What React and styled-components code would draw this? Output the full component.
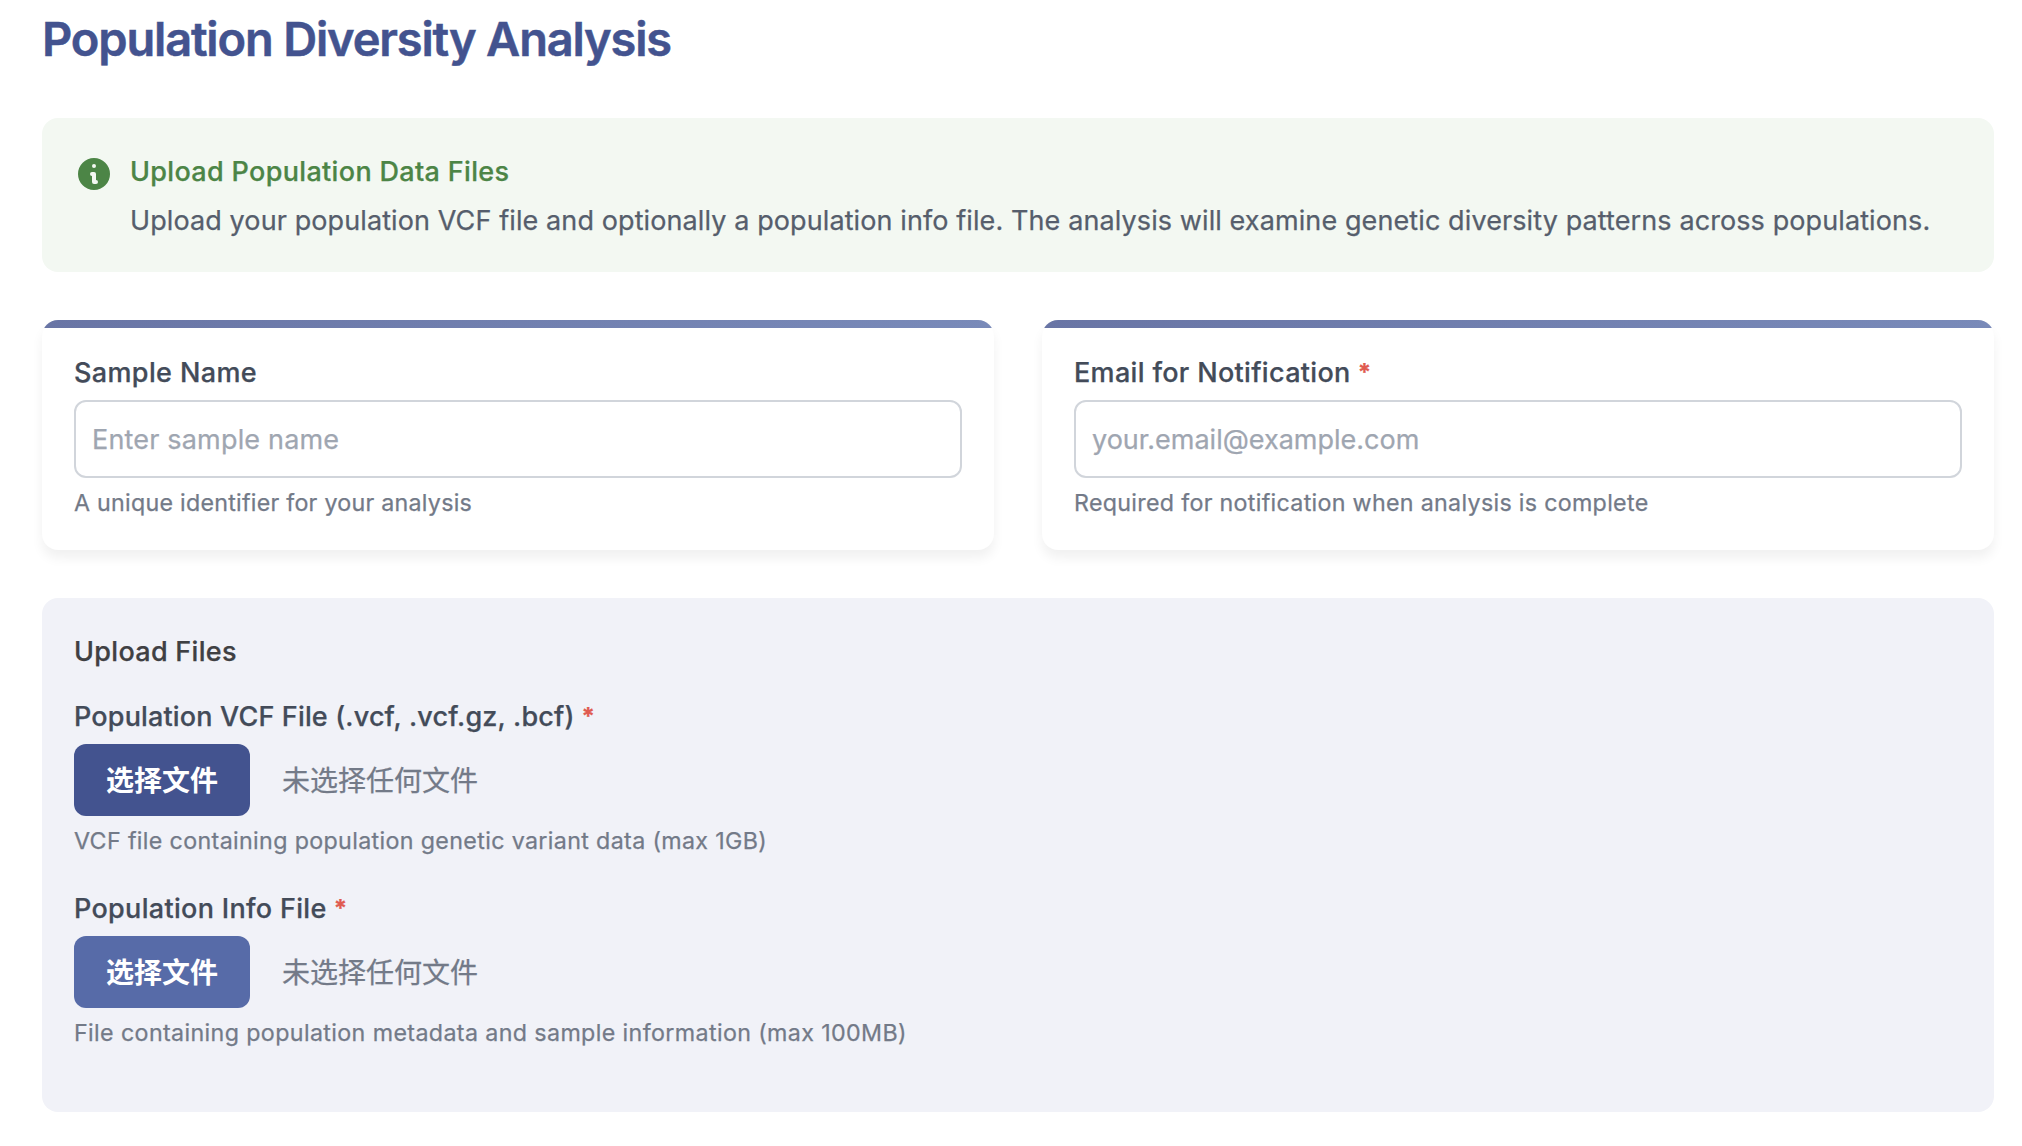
import React from "react";
import styled, { createGlobalStyle } from "styled-components";

const colors = {
  primary: "#43538f",
  secondary: "#576ba8",
  green: "#4c8546",
  greenTint: "#f3f8f2",
  panel: "#f1f2f8",
  label: "#434b59",
  muted: "#737a88",
};

const GlobalStyle = createGlobalStyle`
  *, *::before, *::after {
    box-sizing: border-box;
  }
  body {
    margin: 0;
    background: #fff;
    font-family: Inter, "Noto Sans CJK SC", sans-serif;
    font-size: 27px;
    line-height: 42px;
    -webkit-text-stroke: 0.25px currentColor;
  }
`;

const Page = styled.main`
  display: flex;
  flex-direction: column;
  padding: 11px 28px 34px 42px;
  min-height: 1146px;
`;

const Title = styled.h1`
  margin: 0 0 51px;
  font-size: 47px;
  font-weight: 600;
  line-height: 56px;
  letter-spacing: -1.172px;
  -webkit-text-stroke-width: 0.5px;
  color: ${colors.primary};
`;

const Banner = styled.section`
  display: flex;
  gap: 16px;
  padding: 32px 32px 30px;
  border-radius: 16px;
  background: ${colors.greenTint};
`;

const InfoIcon = styled.svg`
  flex: none;
  width: 40px;
  height: 40px;
  margin-top: 4px;
  fill: ${colors.green};
`;

const BannerText = styled.div`
  flex: 1;
  white-space: nowrap;
`;

const BannerHeading = styled.h2`
  margin: 0 0 6px;
  font-size: 27px;
  font-weight: 500;
  line-height: 44px;
  letter-spacing: 0.33px;
  color: ${colors.green};
`;

const BannerBody = styled.p`
  margin: 0;
  letter-spacing: 0.1px;
  color: #565e6c;
`;

const CardGrid = styled.div`
  display: grid;
  grid-template-columns: 1fr 1fr;
  gap: 48px;
  margin: 48px 0;
`;

const Card = styled.section`
  padding: 32px 32px 30px;
  border-radius: 16px;
  background: linear-gradient(90deg, #6975a5, #798ab9) top / 100% 8px no-repeat #fff;
  box-shadow: 0 8px 12px rgba(0, 0, 0, 0.06);
`;

const FieldLabel = styled.label`
  display: flex;
  gap: 7px;
  margin-bottom: 6px;
  font-weight: 500;
  letter-spacing: ${(p) => p.$tracking}px;
  color: ${colors.label};
`;

const RequiredMark = styled.span`
  color: #e05a50;
  font-size: 24px;
  font-weight: 700;
  line-height: 42px;
  letter-spacing: 0;
`;

const TextInput = styled.input`
  display: block;
  width: 100%;
  height: 78px;
  padding: 0 16px;
  border: 2px solid #d1d5db;
  border-radius: 12px;
  background: #fff;
  font: inherit;
  letter-spacing: ${(p) => p.$tracking}px;

  &::placeholder {
    color: #9fa6b1;
    opacity: 1;
  }
`;

const HelpText = styled.p`
  margin: 8px 0 0;
  font-size: 23.25px;
  line-height: 34px;
  letter-spacing: ${(p) => p.$tracking}px;
  color: ${colors.muted};
`;

const UploadPanel = styled.section`
  padding: 32px;
  border-radius: 16px;
  background: ${colors.panel};
`;

const PanelHeading = styled.h2`
  margin: 0 0 22px;
  font-size: 27px;
  font-weight: 500;
  line-height: 44px;
  letter-spacing: 0.3px;
  color: #3f4043;
`;

const UploadField = styled.div`
  margin-bottom: 30px;
`;

const FileRow = styled.div`
  display: flex;
  align-items: center;
  gap: 32px;
  font-family: "Noto Sans CJK SC", sans-serif;
  font-size: 28px;
`;

const FileButton = styled.button`
  height: 72px;
  padding: 0 32px 2px;
  border: 0;
  border-radius: 12px;
  background: ${(p) => (p.$secondary ? colors.secondary : colors.primary)};
  color: #fff;
  font: inherit;
  font-weight: 700;
  -webkit-text-stroke-width: 0;
`;

const FileStatus = styled.span`
  padding-bottom: 2px;
  color: ${colors.muted};
`;

function TextField({ id, label, required, placeholder, help, tracking }) {
  return (
    <Card>
      <FieldLabel htmlFor={id} $tracking={tracking.label}>
        {label}
        {required && <RequiredMark>*</RequiredMark>}
      </FieldLabel>
      <TextInput id={id} placeholder={placeholder} $tracking={tracking.input} />
      <HelpText $tracking={tracking.help}>{help}</HelpText>
    </Card>
  );
}

function FileField({ label, help, secondary, tracking }) {
  return (
    <UploadField>
      <FieldLabel as="div" $tracking={tracking.label}>
        {label}
        <RequiredMark>*</RequiredMark>
      </FieldLabel>
      <FileRow>
        <FileButton type="button" $secondary={secondary}>选择文件</FileButton>
        <FileStatus>未选择任何文件</FileStatus>
      </FileRow>
      <HelpText $tracking={tracking.help}>{help}</HelpText>
    </UploadField>
  );
}

export default function App() {
  return (
    <>
      <GlobalStyle />
      <Page>
        <Title>Population Diversity Analysis</Title>
        <Banner>
          <InfoIcon viewBox="0 0 20 20" aria-hidden="true">
            <path
              fillRule="evenodd"
              clipRule="evenodd"
              d="M18 10a8 8 0 11-16 0 8 8 0 0116 0zm-7-4a1 1 0 11-2 0 1 1 0 012 0zM9 9a1 1 0 000 2v3a1 1 0 001 1h1a1 1 0 100-2v-3a1 1 0 00-1-1H9z"
            />
          </InfoIcon>
          <BannerText>
            <BannerHeading>Upload Population Data Files</BannerHeading>
            <BannerBody>
              Upload your population VCF file and optionally a population info file. The analysis will examine genetic diversity patterns across populations.
            </BannerBody>
          </BannerText>
        </Banner>
        <CardGrid>
          <TextField
            id="sample"
            label="Sample Name"
            placeholder="Enter sample name"
            help="A unique identifier for your analysis"
            tracking={{ label: 0.37, input: 0.18, help: 0.25 }}
          />
          <TextField
            id="email"
            label="Email for Notification"
            required
            placeholder="your.email@example.com"
            help="Required for notification when analysis is complete"
            tracking={{ label: 0.33, input: 0, help: 0.3 }}
          />
        </CardGrid>
        <UploadPanel>
          <PanelHeading>Upload Files</PanelHeading>
          <FileField
            label="Population VCF File (.vcf, .vcf.gz, .bcf)"
            help="VCF file containing population genetic variant data (max 1GB)"
            tracking={{ label: 0.165, help: 0.345 }}
          />
          <FileField
            label="Population Info File"
            help="File containing population metadata and sample information (max 100MB)"
            secondary
            tracking={{ label: 0.32, help: 0.37 }}
          />
        </UploadPanel>
      </Page>
    </>
  );
}
